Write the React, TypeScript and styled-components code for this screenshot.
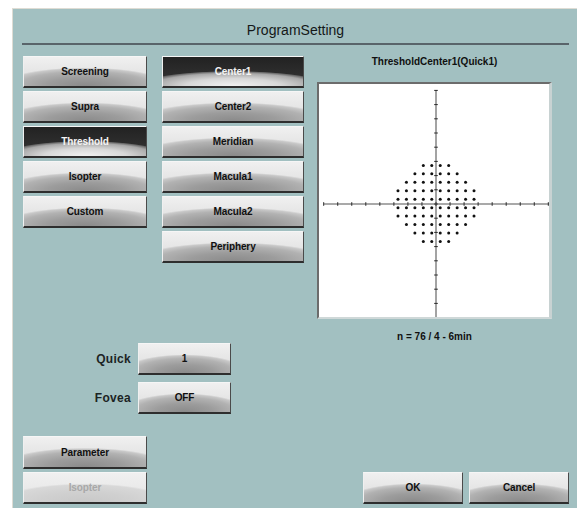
import React, { useState } from "react";
import styled, { createGlobalStyle, css } from "styled-components";

const GlobalStyle = createGlobalStyle`
  html, body { margin: 0; padding: 0; background: #ffffff; }
  body { font-family: "Liberation Sans", Arial, sans-serif; }
  * { box-sizing: border-box; }
`;

const Frame = styled.div`
  margin: 8px 0 0 12px;
  width: 565px;
  height: 500px;
  background: #a2c0c1;
  border-top: 1px solid #dedcd4;
  border-left: 1px solid #dedcd4;
  padding: 0 8px 0 9px;
  display: flex;
  flex-direction: column;
`;

const Header = styled.div`
  height: 34px;
  padding-top: 13px;
  text-align: center;
  font-size: 14px;
  line-height: 16px;
  color: #141818;
`;

const Rule = styled.div`
  height: 2px;
  background: #59646a;
`;

const Body = styled.div`
  flex: 1;
  display: flex;
  flex-direction: column;
  padding-left: 1px;
`;

const TopRow = styled.div`
  margin-top: 11px;
  height: 287px;
  display: flex;
  align-items: flex-start;
`;

const ButtonColumn = styled.div<{ $width: number; $offset?: number }>`
  width: ${(p) => p.$width}px;
  margin-left: ${(p) => p.$offset ?? 0}px;
  display: flex;
  flex-direction: column;
  gap: 3px;
`;

type Variant = "normal" | "selected" | "disabled";

const variants = {
  normal: css`
    color: #101010;
    background:
      radial-gradient(ellipse 70% 64% at 50% 100%, #8a8a8a 0%, #9c9c9c 45%, #b2b2b2 78%, #c8c8c8 93%, rgba(200, 200, 200, 0) 100%),
      linear-gradient(#f0f0f0, #dcdcdc);
  `,
  selected: css`
    color: #f4f4f4;
    background:
      radial-gradient(ellipse 68% 52% at 50% 100%, #f2f2f2 0%, #d8d8d8 50%, #a8a8a8 84%, #6a6a6a 95%, rgba(80, 80, 80, 0) 100%),
      linear-gradient(#222222, #363636);
  `,
  disabled: css`
    color: #a8a8a8;
    background:
      radial-gradient(ellipse 70% 64% at 50% 100%, #c8c8c8 0%, #d0d0d0 55%, #d8d8d8 92%, rgba(216, 216, 216, 0) 100%),
      linear-gradient(#f0f0f0, #e4e4e4);
  `,
};

const Button = styled.button<{ $variant?: Variant; $width?: number; $height?: number }>`
  width: ${(p) => (p.$width ? `${p.$width}px` : "100%")};
  height: ${(p) => p.$height ?? 32}px;
  padding: 1px 0 0;
  margin: 0;
  border-style: solid;
  border-width: 1px 1px 2px 1px;
  border-color: #f6f6f6 #4a4a4a #2e2e2e #f0f0f0;
  font-family: "Liberation Sans", Arial, sans-serif;
  font-weight: bold;
  font-size: 10px;
  line-height: 12px;
  letter-spacing: -0.1px;
  cursor: pointer;
  ${(p) => variants[p.$variant ?? "normal"]}
`;

const PlotPanel = styled.div`
  width: 235px;
  margin-left: 13px;
  display: flex;
  flex-direction: column;
  align-items: center;
`;

const PlotTitle = styled.div`
  height: 12px;
  line-height: 12px;
  font-size: 10px;
  font-weight: bold;
  color: #101010;
  white-space: nowrap;
`;

const PlotFrame = styled.div`
  margin-top: 14px;
  width: 235px;
  height: 237px;
  background: #ffffff;
  border-style: solid;
  border-width: 2px 3px 2px 2px;
  border-color: #6c6c6c #c8d2d2 #cfd8d8 #6c6c6c;
  svg { display: block; }
`;

const Caption = styled.div`
  margin-top: 12px;
  height: 12px;
  line-height: 12px;
  font-size: 10px;
  font-weight: bold;
  color: #101010;
  white-space: nowrap;
`;

const Options = styled.div`
  display: flex;
  flex-direction: column;
  gap: 7px;
`;

const OptionRow = styled.div`
  display: flex;
  align-items: center;
  gap: 7px;
`;

const OptionLabel = styled.div`
  width: 108px;
  text-align: right;
  font-size: 12px;
  font-weight: bold;
  color: #1c2424;
  letter-spacing: 0.3px;
`;

const BottomRow = styled.div`
  margin-top: 22px;
  display: flex;
  align-items: flex-end;
`;

const ActionGroup = styled.div`
  margin-left: auto;
  display: flex;
  gap: 6px;
`;

const cx = 117;
const cy = 120;

function FieldPlot() {
  const ticks = Array.from({ length: 17 }, (_, i) => i - 8);
  const dots: { x: number; y: number }[] = [];
  for (let r = 0; r < 10; r++) {
    for (let c = 0; c < 10; c++) {
      const ux = Math.abs(c - 4.5);
      const uy = Math.abs(r - 4.5);
      if (ux + uy <= 6) {
        dots.push({ x: cx + (c - 4.5) * 8.45, y: cy - 0.6 + (r - 4.5) * 8.45 });
      }
    }
  }
  return (
    <svg width="230" height="233" viewBox="0 0 230 233">
      <line x1={5} y1={cy} x2={230} y2={cy} stroke="#8c8c8c" strokeWidth={1.6} />
      <line x1={cx} y1={6} x2={cx} y2={233} stroke="#8c8c8c" strokeWidth={1.6} />
      {ticks.map((t) => (
        <line
          key={`h${t}`}
          x1={cx + t * 14.04}
          y1={cy - 1.8}
          x2={cx + t * 14.04}
          y2={cy + 1.8}
          stroke="#2a2a2a"
          strokeWidth={1}
        />
      ))}
      {ticks.map((t) => (
        <line
          key={`v${t}`}
          x1={cx - 1.8}
          y1={cy + t * 14.2}
          x2={cx + 1.8}
          y2={cy + t * 14.2}
          stroke="#2a2a2a"
          strokeWidth={1}
        />
      ))}
      {dots.map((d, i) => (
        <circle key={i} cx={d.x} cy={d.y} r={1.5} fill="#111111" />
      ))}
    </svg>
  );
}

const strategies = ["Screening", "Supra", "Threshold", "Isopter", "Custom"];
const programs = ["Center1", "Center2", "Meridian", "Macula1", "Macula2", "Periphery"];

export default function App() {
  const [strategy, setStrategy] = useState("Threshold");
  const [program, setProgram] = useState("Center1");

  return (
    <>
      <GlobalStyle />
      <Frame>
        <Header>ProgramSetting</Header>
        <Rule />
        <Body>
          <TopRow>
            <ButtonColumn $width={124}>
              {strategies.map((s) => (
                <Button
                  key={s}
                  $variant={s === strategy ? "selected" : "normal"}
                  onClick={() => setStrategy(s)}
                >
                  {s}
                </Button>
              ))}
            </ButtonColumn>
            <ButtonColumn $width={142} $offset={15}>
              {programs.map((p) => (
                <Button
                  key={p}
                  $variant={p === program ? "selected" : "normal"}
                  onClick={() => setProgram(p)}
                >
                  {p}
                </Button>
              ))}
            </ButtonColumn>
            <PlotPanel>
              <PlotTitle>ThresholdCenter1(Quick1)</PlotTitle>
              <PlotFrame>
                <FieldPlot />
              </PlotFrame>
              <Caption>n = 76 / 4 - 6min</Caption>
            </PlotPanel>
          </TopRow>
          <Options>
            <OptionRow>
              <OptionLabel>Quick</OptionLabel>
              <Button $width={93}>1</Button>
            </OptionRow>
            <OptionRow>
              <OptionLabel>Fovea</OptionLabel>
              <Button $width={93}>OFF</Button>
            </OptionRow>
          </Options>
          <BottomRow>
            <ButtonColumn $width={124}>
              <Button $height={33}>Parameter</Button>
              <Button $variant="disabled" disabled>
                Isopter
              </Button>
            </ButtonColumn>
            <ActionGroup>
              <Button $width={100}>OK</Button>
              <Button $width={100}>Cancel</Button>
            </ActionGroup>
          </BottomRow>
        </Body>
      </Frame>
    </>
  );
}
